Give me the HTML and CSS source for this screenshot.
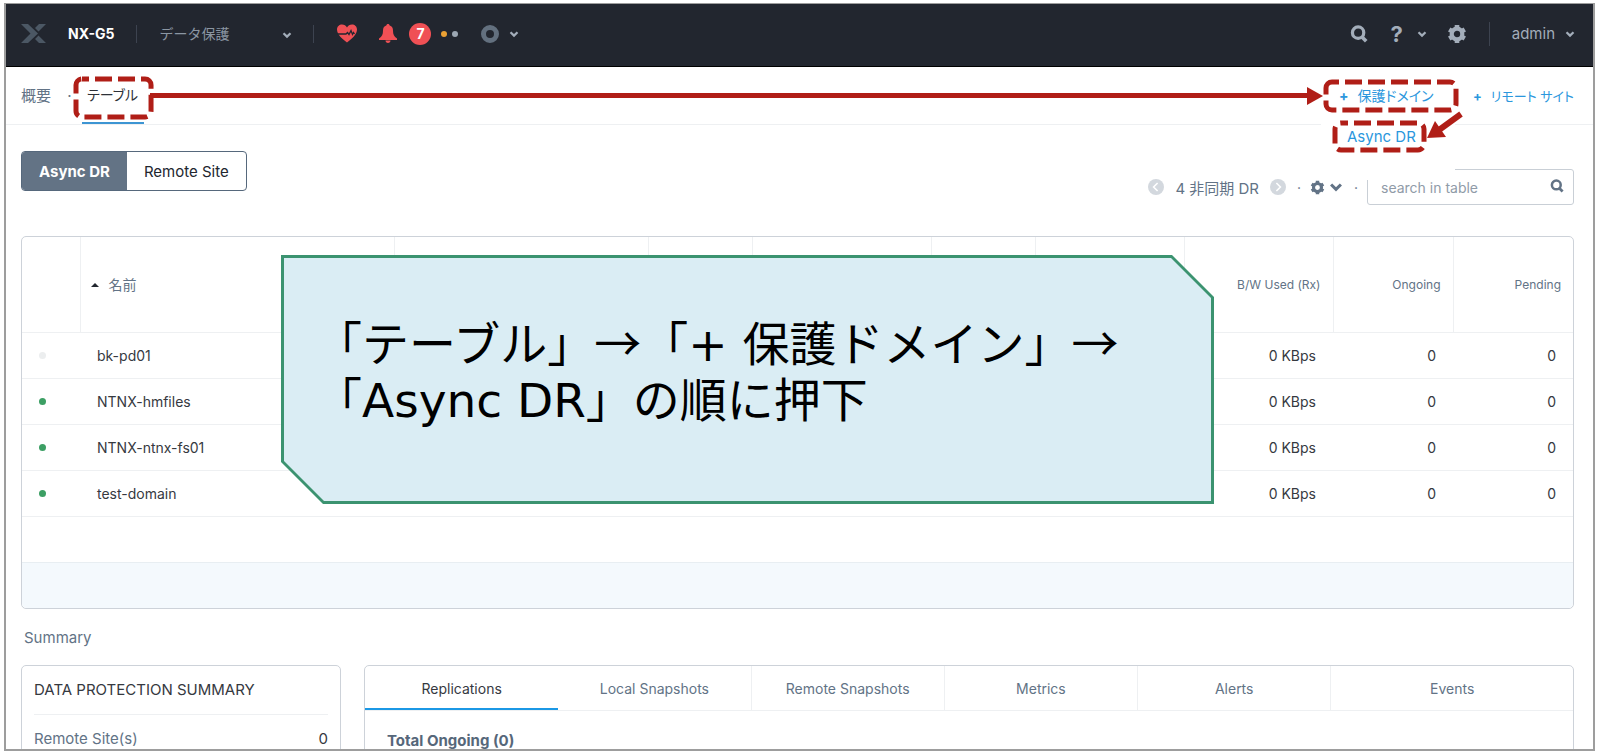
FILE: index.html
```html
<!DOCTYPE html>
<html lang="ja">
<head>
    <meta charset="UTF-8">
    <meta name="viewport" content="width=device-width, initial-scale=1.0">
    <title>データ保護 - NX-G5</title>
    <link rel="stylesheet" href="styles.css">
</head>
<body>
    <!-- shared icons -->
    <svg class="defs" width="0" height="0" aria-hidden="true">
        <symbol id="chevron" viewBox="0 0 10 10"><path d="M1.5 3.2 5 6.6 8.500 3.200" fill="none" stroke="currentColor" stroke-width="2.2"/></symbol>
        <symbol id="search" viewBox="0 0 20 20">
            <circle cx="9" cy="8.500" r="6.300" fill="none" stroke="currentColor" stroke-width="3.600"/>
            <path d="M13 13l5 5" stroke="currentColor" stroke-width="4"/>
        </symbol>
        <symbol id="gear" viewBox="0 0 20 20">
            <g stroke="currentColor" fill="none">
                <circle cx="10" cy="10" r="5.300" stroke-width="4.200"/>
                <path d="M10 1v3M10 16v3M2.200 5.500l2.600 1.500M15.200 13l2.600 1.500M2.200 14.500l2.600-1.500M15.200 7l2.600-1.500" stroke-width="4.600"/>
            </g>
        </symbol>
    </svg>

    <div class="frame">
        <header class="topbar">
            <svg class="logo" viewBox="0 0 25 19" aria-label="Nutanix">
                <path d="M0 0h7l10 9.500L7 19H0l9.500-9.500zM25 0h-7l-4 4 3.500 3.500zM25 19h-7l-4-4 3.500-3.500z" fill="#4b5764"/>
            </svg>
            <span class="cluster">NX-G5</span>
            <span class="divider"></span>
            <div class="page-select">
                <select aria-label="ページ"><option>データ保護</option></select>
                <svg class="chevron"><use href="#chevron"/></svg>
            </div>
            <span class="divider"></span>
            <button class="icon-btn heart" aria-label="Health">
                <svg width="20" height="19" viewBox="0 0 20 19">
                    <path d="M10 18.500C5 14.500 0 10.500 0 5.500 0 2.500 2.300.5 5 .5c2.200 0 4 1 5 3 1-2 2.800-3 5-3 2.700 0 5 2 5 5 0 5-5 9-10 13z" fill="#f05055"/>
                    <path d="M0 10h9l1.500-1.500 1.500 2 2-4 1.500 4 1-2 1 1.500" fill="none" stroke="#22262f" stroke-width="1.300"/>
                </svg>
            </button>
            <button class="icon-btn bell" aria-label="Alerts">
                <svg width="18" height="19" viewBox="0 0 18 19">
                    <path d="M9 0c1 0 1.500.7 1.700 1.500C13 2 14 4 14 6.500c0 4 1 6 4 8V16H0v-1.500c3-2 4-4 4-8C4 4 5 2 7.300 1.500 7.500.7 8 0 9 0zM6.500 16.500h5C11.500 18 10.500 19 9 19s-2.500-1-2.500-2.500z" fill="#f05055"/>
                </svg>
            </button>
            <span class="badge">7</span>
            <span class="level warn"></span>
            <span class="level info"></span>
            <button class="icon-btn tasks" aria-label="Tasks">
                <span class="ring"></span>
                <svg class="chevron"><use href="#chevron"/></svg>
            </button>
            <div class="topbar-right">
                <button class="icon-btn" aria-label="検索"><svg width="18" height="18"><use href="#search"/></svg></button>
                <button class="icon-btn help" aria-label="ヘルプ"><b>?</b><svg class="chevron"><use href="#chevron"/></svg></button>
                <button class="icon-btn settings" aria-label="設定"><svg width="20" height="20"><use href="#gear"/></svg></button>
                <span class="divider tall"></span>
                <button class="icon-btn user">admin<svg class="chevron"><use href="#chevron"/></svg></button>
            </div>
        </header>

        <nav class="subnav">
            <a class="tab" href="#">概要</a>
            <span class="sep">·</span>
            <a class="tab active" href="#">テーブル
                <svg class="mark mark-tab"><rect x="3" y="3" rx="6"/></svg>
            </a>
            <div class="long-arrow">
                <svg width="16" height="18" viewBox="0 0 16 18"><path d="M0 0l16 9-16 9z" fill="#b01e17"/></svg>
            </div>
            <div class="create">
                <a href="#"><b>+</b>保護ドメイン</a>
                <div class="menu">
                    <a href="#">Async DR
                        <svg class="mark"><rect x="3" y="3" rx="6"/></svg>
                    </a>
                </div>
                <svg class="mark"><rect x="3" y="3" rx="6"/></svg>
                <svg class="short-arrow" viewBox="0 0 36 28">
                    <path d="M34 3L12 19" stroke="#b01e17" stroke-width="6"/>
                    <path d="M0 27l8-17 11 16z" fill="#b01e17"/>
                </svg>
            </div>
            <a class="remote" href="#"><b>+</b>リモート サイト</a>
        </nav>

        <main>
            <div class="toolbar">
                <div class="segment">
                    <button class="on">Async DR</button>
                    <button>Remote Site</button>
                </div>
                <div class="tools">
                    <button class="pager" aria-label="前へ"><svg viewBox="0 0 10 10"><path d="M6 2.500L3.500 5 6 7.500"/></svg></button>
                    <span class="count">4 非同期 DR</span>
                    <button class="pager" aria-label="次へ"><svg viewBox="0 0 10 10"><path d="M4 2.500L6.500 5 4 7.500"/></svg></button>
                    <span class="sep">·</span>
                    <button class="icon-btn table-gear" aria-label="テーブル設定">
                        <svg width="15" height="15"><use href="#gear"/></svg>
                        <svg width="14" height="14"><use href="#chevron"/></svg>
                    </button>
                    <span class="sep">·</span>
                    <div class="search">
                        <input type="text" placeholder="search in table" aria-label="search in table">
                        <svg width="14" height="14"><use href="#search"/></svg>
                    </div>
                </div>
            </div>

            <div class="table-box">
                <table>
                    <colgroup>
                        <col class="c-status"><col><col class="c-wide"><col class="c-small"><col class="c-mid">
                        <col class="c-small"><col class="c-bw"><col class="c-bw"><col class="c-num"><col class="c-num">
                    </colgroup>
                    <thead>
                        <tr>
                            <th></th>
                            <th class="name"><span class="sort"></span>名前</th>
                            <th></th><th></th><th></th><th></th><th></th>
                            <th>B/W Used (Rx)</th>
                            <th>Ongoing</th>
                            <th>Pending</th>
                        </tr>
                    </thead>
                    <tbody>
                        <tr>
                            <td><span class="dot off"></span></td><td class="name">bk-pd01</td>
                            <td></td><td></td><td></td><td></td><td></td>
                            <td>0 KBps</td><td>0</td><td>0</td>
                        </tr>
                        <tr>
                            <td><span class="dot"></span></td><td class="name">NTNX-hmfiles</td>
                            <td></td><td></td><td></td><td></td><td></td>
                            <td>0 KBps</td><td>0</td><td>0</td>
                        </tr>
                        <tr>
                            <td><span class="dot"></span></td><td class="name">NTNX-ntnx-fs01</td>
                            <td></td><td></td><td></td><td></td><td></td>
                            <td>0 KBps</td><td>0</td><td>0</td>
                        </tr>
                        <tr>
                            <td><span class="dot"></span></td><td class="name">test-domain</td>
                            <td></td><td></td><td></td><td></td><td></td>
                            <td>0 KBps</td><td>0</td><td>0</td>
                        </tr>
                    </tbody>
                </table>
                <div class="table-blank"></div>
                <div class="table-foot"></div>

                <div class="callout">
                    <p>「テーブル」<span>→</span>「+ 保護ドメイン」<span>→</span><br>「Async DR」の順に押下</p>
                </div>
            </div>

            <h2>Summary</h2>

            <div class="panels">
                <section class="panel summary">
                    <h3>DATA PROTECTION SUMMARY</h3>
                    <dl>
                        <dt>Remote Site(s)</dt>
                        <dd>0</dd>
                    </dl>
                </section>
                <section class="panel detail">
                    <div class="tabs">
                        <button class="on">Replications</button>
                        <button>Local Snapshots</button>
                        <button>Remote Snapshots</button>
                        <button>Metrics</button>
                        <button>Alerts</button>
                        <button>Events</button>
                    </div>
                    <h4>Total Ongoing (0)</h4>
                </section>
            </div>
        </main>
    </div>
</body>
</html>
```
FILE: styles.css
```css
* {
    box-sizing: border-box;
}

body {
    margin: 0;
    padding: 3px 5px 4px 4px;
    height: 100vh;
    background: #fff;
    font-family: Inter, "Noto Sans CJK JP", sans-serif;
    font-size: 14px;
    color: #36393f;
}

a {
    color: inherit;
    text-decoration: none;
}

button {
    font: inherit;
    color: inherit;
    background: none;
    border: 0;
    padding: 0;
}

.defs {
    position: absolute;
}

.frame {
    height: 100%;
    overflow: hidden;
    border: 2px solid #9d9d9d;
    border-top-width: 1px;
}

/* top bar */
.topbar {
    display: flex;
    align-items: center;
    height: 63px;
    padding: 0 18px 3px 15px;
    background: #22262f;
    border-bottom: 1px solid #000;
    color: #a3adba;
}

.logo {
    width: 25px;
    height: 19px;
}

.cluster {
    margin: 0 22px;
    color: #fff;
    font-weight: bold;
}

.divider {
    width: 1px;
    height: 18px;
    background: #3d4350;
}

.divider.tall {
    height: 24px;
    margin: 0 22px;
}

.chevron {
    width: 10px;
    height: 10px;
}

.page-select {
    position: relative;
    width: 154px;
    margin-left: 22px;
}

.page-select select {
    width: 100%;
    appearance: none;
    border: 0;
    padding: 0;
    background: none;
    color: #8b96a3;
    font: inherit;
}

.page-select .chevron {
    position: absolute;
    right: 21px;
    top: 5px;
    pointer-events: none;
}

.icon-btn {
    display: flex;
    align-items: center;
}

.heart {
    margin-left: 23px;
}

.bell {
    margin-left: 22px;
}

.badge {
    width: 22px;
    height: 22px;
    margin: 0 10px 0 12px;
    border-radius: 50%;
    background: #f05055;
    color: #fff;
    font-weight: bold;
    line-height: 22px;
    text-align: center;
}

.level {
    width: 6px;
    height: 6px;
    margin-right: 5px;
    border-radius: 50%;
}

.warn {
    background: #eba134;
}

.info {
    background: #9ca7b3;
}

.tasks {
    margin-left: 18px;
    gap: 10px;
}

.ring {
    width: 18px;
    height: 18px;
    border: 5px solid #63707f;
    border-radius: 50%;
}

.topbar-right {
    display: flex;
    align-items: center;
    margin-left: auto;
}

.help {
    margin-left: 22px;
    gap: 14px;
}

.help b {
    font-size: 22px;
    line-height: 22px;
}

.settings {
    margin-left: 20px;
}

.user {
    gap: 10px;
    font-size: 15px;
}

/* sub navigation */
.subnav {
    display: flex;
    align-items: center;
    height: 58px;
    padding: 0 19px 0 15px;
    border-bottom: 1px solid #eef0f2;
    font-size: 15px;
    font-feature-settings: "palt";
    color: #627386;
}

.sep {
    width: 19px;
    margin-left: 9px;
    text-align: center;
}

.tab {
    position: relative;
    line-height: 54px;
}

.tab.active {
    margin-left: 3px;
    padding: 0 6px 0 5px;
    border-bottom: 2px solid #3d95d3;
    color: #2d3138;
    font-size: 14px;
}

/* dashed highlight boxes */
.mark {
    position: absolute;
    left: 0;
    top: 0;
    width: 100%;
    height: 100%;
    pointer-events: none;
}

.mark rect {
    width: calc(100% - 6px);
    height: calc(100% - 6px);
    fill: none;
    stroke: #b01e17;
    stroke-width: 5;
    stroke-dasharray: 17 6;
    stroke-dashoffset: 10;
}

.mark-tab {
    left: -9px;
    top: 8px;
    width: calc(100% + 19px);
    height: 44px;
}

.long-arrow {
    flex: 1;
    display: flex;
    align-items: center;
    margin-left: 6px;
}

.long-arrow::before {
    content: "";
    flex: 1;
    height: 5px;
    background: #b01e17;
}

.create {
    position: relative;
    width: 136px;
    line-height: 34px;
    padding-left: 16px;
    color: #2b97dd;
    font-size: 14px;
}

.subnav b {
    margin-right: 9px;
}

.menu {
    position: absolute;
    left: -2px;
    top: 38px;
    width: 134px;
    height: 63px;
    padding: 3px 0 0 11px;
    background: #fff;
}

.menu a {
    position: relative;
    display: block;
    width: 95px;
    padding-left: 15px;
    font-size: 15px;
    line-height: 33px;
}

.short-arrow {
    position: absolute;
    right: -4px;
    top: 32px;
    width: 36px;
    height: 28px;
}

.remote {
    margin-left: 14px;
    color: #2b97dd;
    font-size: 13px;
    line-height: 34px;
}

/* table toolbar */
main {
    padding: 26px 19px 0 15px;
}

.toolbar {
    display: flex;
    justify-content: space-between;
    align-items: flex-start;
    height: 85px;
}

.segment {
    display: flex;
    height: 40px;
    border: 1px solid #56687c;
    border-radius: 4px;
    overflow: hidden;
    font-size: 15px;
}

.segment button {
    padding: 0 17px;
    color: #22262f;
}

.segment .on {
    background: #637385;
    color: #fff;
    font-weight: bold;
}

.tools {
    display: flex;
    align-items: center;
    margin-top: 18px;
    color: #627386;
}

.pager {
    width: 16px;
    height: 16px;
    border-radius: 50%;
    background: #d3d8de;
}

.pager svg {
    display: block;
    width: 16px;
    height: 16px;
    fill: none;
    stroke: #fff;
    stroke-width: 1;
}

.count {
    margin: 0 11px;
    font-size: 15px;
}

.tools .sep {
    width: 12px;
    margin: 0 5px 0 7px;
}

.table-gear {
    gap: 4px;
}

.search {
    position: relative;
    width: 207px;
}

.search input {
    width: 100%;
    height: 36px;
    padding: 0 36px 0 13px;
    border: 1px solid #c9cfd6;
    border-radius: 3px;
    font: inherit;
}

.search input::placeholder {
    color: #909ba8;
}

.search svg {
    position: absolute;
    right: 10px;
    top: 10px;
}

/* the open menu covers the search box */
.create .menu {
    z-index: 1;
}

.create > .mark,
.short-arrow {
    z-index: 2;
}

/* table */
.table-box {
    position: relative;
    border: 1px solid #cdd2d9;
    border-radius: 5px;
}

table {
    width: 100%;
    table-layout: fixed;
    border-collapse: collapse;
}

.c-status { width: 58px; }
.c-wide { width: 254px; }
.c-small { width: 104px; }
.c-mid { width: 179px; }
.c-bw { width: 149px; }
.c-num { width: 120px; }

th {
    height: 95px;
    padding: 0 12px;
    border-right: 1px solid #eef0f2;
    color: #627386;
    font-size: 12px;
    font-weight: normal;
    text-align: right;
}

th:last-child {
    border-right: 0;
}

th.name {
    padding-left: 10px;
    font-size: 14px;
    text-align: left;
}

.sort {
    display: inline-block;
    margin: 0 10px 3px 0;
    border: 4px solid transparent;
    border-top: 0;
    border-bottom-color: #22262f;
}

td {
    height: 46px;
    padding: 0 17px;
    border-top: 1px solid #eef0f2;
    text-align: right;
}

td.name {
    text-align: left;
}

.dot {
    display: block;
    width: 7px;
    height: 7px;
    border-radius: 50%;
    background: #3c9f64;
}

.dot.off {
    background: #eceeef;
}

.table-blank {
    height: 46px;
    border-top: 1px solid #eef0f2;
}

.table-foot {
    height: 46px;
    border-top: 1px solid #e8eef2;
    border-radius: 0 0 5px 5px;
    background: #f4f9fd;
}

/* instruction callout */
.callout {
    position: absolute;
    left: 259px;
    right: 359px;
    top: 18px;
    height: 249px;
    padding: 62px 30px 0 34px;
    background: #3b9370;
    clip-path: polygon(0 0, calc(100% - 42px) 0, 100% 42px, 100% 100%, 42px 100%, 0 calc(100% - 42px));
}

.callout::before {
    content: "";
    position: absolute;
    inset: 3px;
    background: #daedf4;
    clip-path: polygon(0 0, calc(100% - 40px) 0, 100% 40px, 100% 100%, 40px 100%, 0 calc(100% - 40px));
}

.callout p {
    position: relative;
    margin: 0;
    color: #000;
    font-family: "DejaVu Sans", "Noto Sans CJK JP", sans-serif;
    font-size: 47px;
    line-height: 56px;
    white-space: nowrap;
}

.callout span {
    font-family: "Noto Sans CJK JP", sans-serif;
    line-height: 1;
}

/* summary */
h2 {
    margin: 18px 0 17px 3px;
    color: #627386;
    font-size: 15px;
    font-weight: normal;
    line-height: 21px;
}

.panels {
    display: flex;
    gap: 23px;
}

.panel {
    height: 160px;
    border: 1px solid #cdd2d9;
    border-radius: 5px;
}

.summary {
    width: 320px;
    padding: 0 12px;
}

h3 {
    margin: 0;
    border-bottom: 1px solid #eef0f2;
    font-size: 15px;
    font-weight: normal;
    line-height: 48px;
}

dl {
    display: flex;
    justify-content: space-between;
    margin: 0;
    color: #627386;
    font-size: 15px;
    line-height: 48px;
}

dd {
    margin: 0;
    color: #36393f;
}

.detail {
    flex: 1;
}

.tabs {
    display: flex;
    height: 45px;
    border-bottom: 1px solid #eef0f2;
}

.tabs button {
    flex: 0 0 16%;
    border-right: 1px solid #eef0f2;
    color: #627386;
}

.tabs button:last-child {
    flex: 1;
    border-right: 0;
}

.tabs .on {
    border-right: 0;
    box-shadow: inset 0 -2px #1b98e5;
    color: #36393f;
}

h4 {
    margin: 0 0 0 22px;
    color: #56677a;
    font-size: 15px;
    line-height: 60px;
}
```
